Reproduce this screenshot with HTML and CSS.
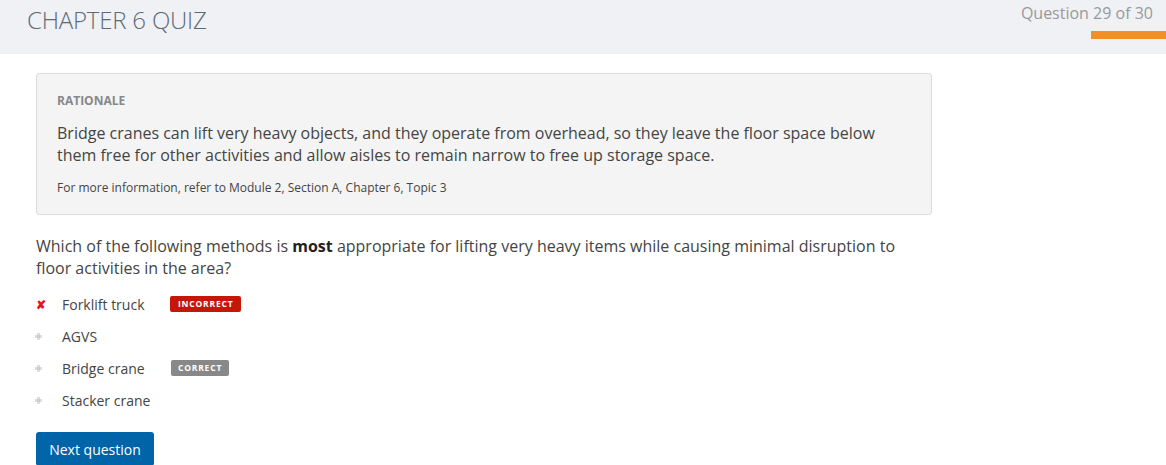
FILE: index.html
```html
<!DOCTYPE html>
<html>
<head>
<meta charset="utf-8">
<link rel="stylesheet" href="styles.css">
</head>
<body>
<header class="topbar">
  <h1 class="title">CHAPTER 6 QUIZ</h1>
  <div class="progress">
    <div class="progress-label">Question 29 of 30</div>
    <div class="progress-bar"></div>
  </div>
</header>
<main class="content">
  <section class="rationale">
    <div class="rationale-head">RATIONALE</div>
    <p class="rationale-text">Bridge cranes can lift very heavy objects, and they operate from overhead, so they leave the floor space below them free for other activities and allow aisles to remain narrow to free up storage space.</p>
    <p class="rationale-ref">For more information, refer to Module 2, Section A, Chapter 6, Topic 3</p>
  </section>
  <p class="question">Which of the following methods is <strong>most</strong> appropriate for lifting very heavy items while causing minimal disruption to floor activities in the area?</p>
  <ul class="options">
    <li class="option"><span class="mark mark-x">✘</span><span class="opt-text">Forklift truck</span><span class="badge badge-incorrect">INCORRECT</span></li>
    <li class="option"><span class="mark"><span class="dot"></span></span><span class="opt-text">AGVS</span></li>
    <li class="option"><span class="mark"><span class="dot"></span></span><span class="opt-text">Bridge crane</span><span class="badge badge-correct">CORRECT</span></li>
    <li class="option"><span class="mark"><span class="dot"></span></span><span class="opt-text">Stacker crane</span></li>
  </ul>
  <button class="next-btn">Next question</button>
</main>
</body>
</html>
```
FILE: styles.css
```css
html, body {
  margin: 0;
  padding: 0;
  background: #ffffff;
  font-family: "Open Sans", "Noto Sans", sans-serif;
  color: #444;
}
.topbar {
  height: 54px;
  background: #eff1f5;
  display: flex;
  justify-content: space-between;
  align-items: flex-start;
}
.title {
  margin: 0;
  padding: 5px 0 0 27px;
  font-weight: 300;
  font-size: 24px;
  line-height: 30px;
  color: #5e6978;
  letter-spacing: -0.2px;
}
.progress {
  display: flex;
  flex-direction: column;
  align-items: flex-end;
}
.progress-label {
  padding: 3px 13px 0 0;
  font-size: 16px;
  line-height: 20px;
  color: #999;
}
.progress-bar {
  margin-top: 8px;
  width: 75px;
  height: 8px;
  background: #f39021;
}
.content {
  padding: 19px 0 0 36px;
  width: 896px;
}
.rationale {
  background: #f4f4f4;
  border: 1px solid #dcdcdc;
  border-radius: 3px;
  padding: 19px 20px 18px 20px;
}
.rationale-head {
  font-size: 12px;
  font-weight: 700;
  color: #888;
  line-height: 16px;
}
.rationale-text {
  margin: 13px 0 0 0;
  font-size: 16px;
  line-height: 22px;
  color: #444;
}
.rationale-ref {
  margin: 14px 0 0 0;
  font-size: 12px;
  line-height: 16px;
  color: #444;
}
.question {
  margin: 20px 0 0 0;
  font-size: 16px;
  line-height: 22px;
  color: #444;
}
.question strong {
  color: #222;
}
.options {
  list-style: none;
  margin: 9px 0 0 0;
  padding: 0;
}
.option {
  display: flex;
  align-items: center;
  height: 32px;
  font-size: 14px;
}
.mark {
  width: 26px;
  display: flex;
  align-items: center;
  justify-content: flex-start;
}
.mark-x {
  color: #e8141c;
  font-size: 12px;
  font-weight: 700;
}
.dot {
  display: block;
  width: 3px;
  height: 3px;
  margin-left: 1px;
  background: #ccc;
  box-shadow: 0 -2px 0 #ddd, 0 2px 0 #ddd, -2px 0 0 #ddd, 2px 0 0 #ddd;
}
.opt-text {
  color: #444;
  width: 108px;
}
.badge {
  font-size: 8.5px;
  font-weight: 700;
  letter-spacing: 0.8px;
  color: #fff;
  border-radius: 2px;
  height: 16px;
  line-height: 16px;
  display: inline-block;
}
.badge-incorrect {
  background: #c4170a;
  padding: 0 8px;
}
.badge-correct {
  background: #888;
  padding: 0 7px;
  margin-left: 1px;
}
.next-btn {
  margin-top: 16px;
  background: #0064a8;
  color: #fff;
  border: none;
  border-radius: 3px;
  font-family: "Open Sans", sans-serif;
  font-size: 14px;
  height: 34px;
  width: 118px;
  padding: 0;
  cursor: pointer;
}
```
